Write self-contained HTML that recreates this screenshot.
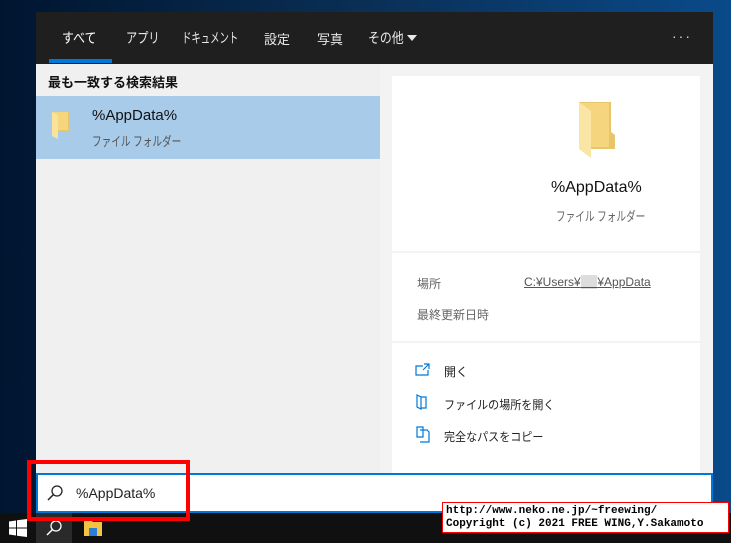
<!DOCTYPE html>
<html><head><meta charset="utf-8"><style>
*{margin:0;padding:0;box-sizing:border-box}
body{width:731px;height:543px;overflow:hidden;background:linear-gradient(90deg,#001530 0%,#0a2f55 50%,#0a4a8a 100%);font-family:"Liberation Sans","Noto Sans CJK JP",sans-serif;position:relative}
.a{position:absolute}
.n{transform:scaleX(0.8);transform-origin:0 0;white-space:nowrap}
.hdr{left:36px;top:12px;width:677px;height:52px;background:#1f1f1f}
.tab{top:28px;color:#e8e8e8;font-size:14px}
.left{left:36px;top:64px;width:344px;height:410px;background:#f0f0f0}
.right{left:380px;top:64px;width:333px;height:410px;background:#f3f3f3}
.card{background:#fff;left:392px;width:308px}
.t{font-size:13px;color:#222}
.g{font-size:12px;color:#666}
</style></head><body>
<div class="a hdr"></div>
<div class="a tab n" style="left:62px;color:#fff;transform:scaleX(0.85)">すべて</div>
<div class="a" style="left:49px;top:59px;width:63px;height:4px;background:#0078d7"></div>
<div class="a tab n" style="left:126px">アプリ</div>
<div class="a tab n" style="left:182px;transform:scaleX(0.67)">ドキュメント</div>
<div class="a tab" style="left:264px;font-size:13px;top:29px">設定</div>
<div class="a tab" style="left:317px;font-size:13px;top:29px">写真</div>
<div class="a tab n" style="left:368px;transform:scaleX(0.85)">その他</div>
<div class="a" style="left:407px;top:35px;width:0;height:0;border-left:5px solid transparent;border-right:5px solid transparent;border-top:6px solid #e8e8e8"></div>
<div class="a" style="left:672px;top:28px;color:#ddd;font-size:14px;letter-spacing:2px">···</div>
<div class="a left"></div>
<div class="a" style="left:48px;top:72px;font-size:13px;color:#111;font-weight:bold">最も一致する検索結果</div>
<div class="a" style="left:36px;top:96px;width:344px;height:63px;background:#a8cbe9"></div>
<svg class="a" style="left:52px;top:111px" width="20" height="28"><path d="M0 0h12l6 0v20h-18z" fill="#e8c46a"/><path d="M1 1h15v18h-15z" fill="#f5d67f"/><path d="M0 1l6 3v24l-6-3z" fill="#f9e39a"/></svg>
<div class="a" style="left:92px;top:107px;font-size:15px;color:#111">%AppData%</div>
<div class="a n" style="left:92px;top:131px;font-size:13px;color:#555;transform:scaleX(0.74)">ファイル フォルダー</div>
<div class="a right"></div>
<div class="a card" style="top:76px;height:175px"></div>
<div class="a card" style="top:253px;height:88px"></div>
<div class="a card" style="top:343px;height:131px"></div>
<svg class="a" style="left:579px;top:102px" width="40" height="56"><path d="M0 0h32v30l4 3v14h-36z" fill="#e8c46a"/><path d="M2 1h28v44h-28z" fill="#f5d67f"/><path d="M0 0l12 9v47l-12-9z" fill="#fae6a4"/></svg>
<div class="a" style="left:551px;top:179px;font-size:16px;color:#111">%AppData%</div>
<div class="a g n" style="left:556px;top:206px;font-size:13px;transform:scaleX(0.74)">ファイル フォルダー</div>
<div class="a g" style="left:417px;top:275px">場所</div>
<div class="a" style="left:524px;top:275px;font-size:12px;color:#555;text-decoration:underline">C:¥Users¥<span style="color:#ccc;background:#ddd">&nbsp;&nbsp;&nbsp;&nbsp;&nbsp;</span>¥AppData</div>
<div class="a g" style="left:417px;top:306px">最終更新日時</div>
<svg class="a" style="left:415px;top:363px" width="16" height="14"><path d="M8 3H1v9h12V7M9 1h5v5M14 1L8 7" fill="none" stroke="#0078d7" stroke-width="1.2"/></svg>
<div class="a t" style="left:444px;top:363px;font-size:12px">開く</div>
<svg class="a" style="left:416px;top:394px" width="12" height="16"><path d="M1 1l4 2v12l-4-2zM5 3h5v11H5" fill="none" stroke="#0078d7" stroke-width="1.2"/></svg>
<div class="a t n" style="left:444px;top:396px;font-size:12px;transform:scaleX(0.92)">ファイルの場所を開く</div>
<svg class="a" style="left:416px;top:426px" width="14" height="17"><path d="M1 1h6v10H1zM4 4h7l2 2v10H4" fill="none" stroke="#0078d7" stroke-width="1.2"/></svg>
<div class="a t n" style="left:444px;top:428px;font-size:12px;transform:scaleX(0.92)">完全なパスをコピー</div>
<div class="a" style="left:36px;top:473px;width:677px;height:40px;background:#fff;border:2px solid #0078d7"></div>
<svg class="a" style="left:46px;top:484px" width="18" height="18"><circle cx="11" cy="7" r="5" fill="none" stroke="#222" stroke-width="1.3"/><path d="M7.5 10.5L2 16" stroke="#222" stroke-width="1.5"/></svg>
<div class="a" style="left:76px;top:485px;font-size:14px;color:#222">%AppData%</div>
<div class="a" style="left:0;top:513px;width:731px;height:30px;background:#101010"></div>
<div class="a" style="left:36px;top:513px;width:36px;height:30px;background:#2a2a2a"></div>
<svg class="a" style="left:9px;top:519px" width="18" height="18"><path d="M0 2.5l7-1v7H0zM8 1.3l10-1.3v8.5H8zM0 9.5h7v7l-7-1zM8 9.5h10V18l-10-1.3z" fill="#fff"/></svg>
<svg class="a" style="left:45px;top:519px" width="18" height="18"><circle cx="11" cy="7" r="5" fill="none" stroke="#fff" stroke-width="1.3"/><path d="M7.5 10.5L2 16" stroke="#fff" stroke-width="1.5"/></svg>
<svg class="a" style="left:84px;top:520px" width="18" height="16"><path d="M0 0h7l2 2h9v14H0z" fill="#f5c342"/><path d="M5 8h8v8H5z" fill="#2b7fd8"/></svg>
<div class="a" style="left:27px;top:460px;width:163px;height:61px;border:4px solid #f00"></div>
<div class="a" style="left:442px;top:502px;width:287px;height:31px;background:#fff;border:1px solid #f00;font-family:'Liberation Mono',monospace;font-size:11px;font-weight:bold;line-height:13px;color:#000;padding:2px 3px;white-space:pre">http://www.neko.ne.jp/~freewing/
Copyright (c) 2021 FREE WING,Y.Sakamoto</div>
</body></html>
